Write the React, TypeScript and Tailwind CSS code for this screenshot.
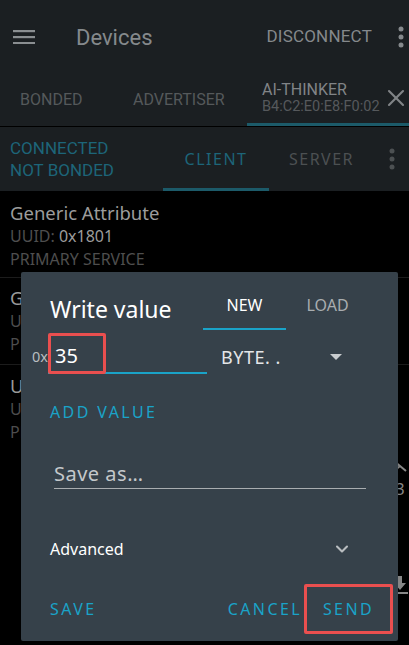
import { ChevronDown, X } from 'lucide-react';

const Dots = () => (
  <svg width="6" height="22" viewBox="0 0 6 22">
    <circle cx="3" cy="3" r="2.5" fill="currentColor" />
    <circle cx="3" cy="11" r="2.5" fill="currentColor" />
    <circle cx="3" cy="19" r="2.5" fill="currentColor" />
  </svg>
);

export default function App() {
  return (
    <div className="relative w-[409px] h-[645px] overflow-hidden bg-black" style={{ fontFamily: 'Roboto, sans-serif' }}>
      {/* App bar */}
      <div className="bg-[#1b1f22]">
        <div className="h-[74px] flex items-center pl-[13px] pr-[5px]">
          <svg width="22" height="14" viewBox="0 0 22 14">
            <rect y="0" width="22" height="2.2" fill="#8a8e91" />
            <rect y="6" width="22" height="2.2" fill="#8a8e91" />
            <rect y="12" width="22" height="2.2" fill="#8a8e91" />
          </svg>
          <span className="ml-[41px] text-[22px] text-[#85898c]">Devices</span>
          <span className="ml-auto text-[17px] text-[#85898c] tracking-[0.2px]">DISCONNECT</span>
          <span className="ml-[26px] text-[#85898c]"><Dots /></span>
        </div>
        <div className="h-[52px] flex items-stretch">
          <div className="w-[113px] shrink-0 flex items-center pl-[20px] text-[16px] text-[#55595b]">BONDED</div>
          <div className="w-[134px] shrink-0 flex items-center pl-[20px] text-[16px] text-[#55595b]">ADVERTISER</div>
          <div className="w-[162px] shrink-0 flex flex-col border-b-[3px] border-[#1c5a69]">
            <div className="flex-1 flex items-center pl-[15px]">
              <div className="shrink-0 flex flex-col leading-none">
                <span className="text-[16px] text-[#818487]">AI-THINKER</span>
                <span className="text-[14.5px] text-[#56595c] mt-[2px]">B4:C2:E0:E8:F0:02</span>
              </div>
              <X className="ml-[2px] mb-[1px] shrink-0 text-[#818487]" size={28} strokeWidth={1.8} />
            </div>
          </div>
        </div>
      </div>
      {/* Connection bar */}
      <div className="mt-px bg-[#1b1f22] h-[64px] flex items-stretch">
        <div className="w-[163px] flex flex-col justify-center pl-[10px] text-[17px] leading-[22px] text-[#1d6579]">
          <span>CONNECTED</span>
          <span>NOT BONDED</span>
        </div>
        <div className="w-[106px] flex items-center justify-center border-b-[3px] border-[#1c5a69] pt-[3px] text-[16px] tracking-[1.5px] text-[#1d6579]" style={{ fontFamily: '"Noto Sans", sans-serif' }}>CLIENT</div>
        <div className="w-[105px] flex items-center justify-center text-[16px] tracking-[1.5px] text-[#4c5052]" style={{ fontFamily: '"Noto Sans", sans-serif' }}>SERVER</div>
        <div className="flex-1 flex items-center justify-center text-[#4c5052]"><Dots /></div>
      </div>
      {/* Services list */}
      <div style={{ fontFamily: '"Noto Sans", sans-serif' }}>
        <div className="px-[10px] pt-[10px] pb-[6px] border-b border-[#1c1c1c]">
          <div className="text-[18.5px] leading-[24px] text-[#9c9c9c]">Generic Attribute</div>
          <div className="text-[16px] leading-[23px] text-[#4e4e4e]">UUID: <span className="text-[#9c9c9c]">0x1801</span></div>
          <div className="text-[16px] leading-[23px] text-[#4e4e4e]">PRIMARY SERVICE</div>
        </div>
        <div className="px-[10px] pt-[8px] pb-[8px] border-b border-[#1c1c1c]">
          <div className="text-[18.5px] leading-[24px] text-[#9c9c9c]">Generic Access</div>
          <div className="text-[16px] leading-[23px] text-[#4e4e4e]">UUID: 0x1800</div>
          <div className="text-[16px] leading-[23px] text-[#4e4e4e]">PRIMARY SERVICE</div>
        </div>
        <div className="px-[10px] pt-[9px] pb-[8px]">
          <div className="text-[18.5px] leading-[24px] text-[#9c9c9c]">Unknown Service</div>
          <div className="text-[16px] leading-[23px] text-[#4e4e4e]">UUID: 0xFFF0</div>
          <div className="text-[16px] leading-[23px] text-[#4e4e4e]">PRIMARY SERVICE</div>
        </div>
        <div className="flex justify-end text-[#8a8a8a]">
          <div className="w-[18px] flex flex-col items-center pt-[6px]">
            <svg width="16" height="16" viewBox="0 0 16 16" fill="none" stroke="#8a8a8a" strokeWidth="2">
              <path d="M2 3l12 10M2 13l6-5 6 5" />
            </svg>
            <span className="text-[16px] leading-[30px]">3</span>
            <svg className="mt-[72px]" width="16" height="18" viewBox="0 0 16 18" fill="#8a8a8a">
              <path d="M6 0h4v7h4l-6 7-6-7h4z" />
              <rect y="16" width="16" height="2" />
            </svg>
          </div>
        </div>
      </div>
      {/* Dialog */}
      <div className="absolute left-[21px] top-[272px] w-[377px] h-[369px] bg-[#36414a] rounded-[2px] shadow-lg" style={{ fontFamily: '"Noto Sans", sans-serif' }}>
        <div className="h-[58px] flex items-start pl-[29px]">
          <span className="w-[153px] mt-[19px] text-[23px] text-white leading-[36px]">Write value</span>
          <div className="mt-[22px] w-[83px] flex justify-center leading-[22px] pb-[12px] border-b-[2px] border-[#1aa3c8] text-[16px] text-white">NEW</div>
          <div className="mt-[22px] w-[83px] flex justify-center leading-[22px] text-[16px] text-[#a9adb0]">LOAD</div>
        </div>
        <div className="flex items-stretch h-[44px]">
          <span className="ml-[11px] w-[16px] pt-[10px] flex items-center text-[14.5px] text-[#b9bdc0]">0x</span>
          <div className="relative w-[159px] border-b-[2px] border-[#1aa3c8] pt-[10px] flex items-center">
            <span className="pl-[7px] text-[20px] text-white">35</span>
            <div className="absolute left-0 top-[3px] w-[58px] h-[41px] border-[3px] border-[#ea4f4f] rounded-[2px]" />
          </div>
          <span className="ml-[14px] w-[109px] pt-[10px] flex items-center text-[18px] text-[#e4e6e8] tracking-[0.5px]">BYTE. .</span>
          <div className="pt-[10px] flex items-center">
            <svg width="12" height="6" viewBox="0 0 12 6"><path d="M0 0h12L6 6z" fill="#c9cdd0" /></svg>
          </div>
        </div>
        <div className="ml-[29px] mt-[27px] text-[16px] leading-[22px] tracking-[2.4px] text-[#1aa3c8]">ADD VALUE</div>
        <div className="ml-[33px] mr-[32px] mt-[37px] leading-[28px] border-b border-[#a9adb0] text-[20px] tracking-[0.5px] text-[#c4c8cb]">Save as…</div>
        <div className="flex items-center h-[24px] pl-[29px] pr-[46px] mt-[48px]">
          <span className="text-[16px] text-white">Advanced</span>
          <ChevronDown className="ml-auto text-[#b9bdc0]" size={20} strokeWidth={2.5} />
        </div>
        <div className="flex items-center pl-[29px] mt-[23px]">
          <span className="text-[16px] tracking-[2.4px] text-[#1aa3c8]">SAVE</span>
          <span className="ml-auto text-[16px] tracking-[2.4px] text-[#1aa3c8]">CANCEL</span>
          <div className="ml-[2px] mr-[5px] w-[89px] h-[50px] border-[3px] border-[#ea4f4f] rounded-[2px] flex items-center justify-center">
            <span className="text-[16px] tracking-[2.4px] text-[#1aa3c8]">SEND</span>
          </div>
        </div>
      </div>
    </div>
  );
}
